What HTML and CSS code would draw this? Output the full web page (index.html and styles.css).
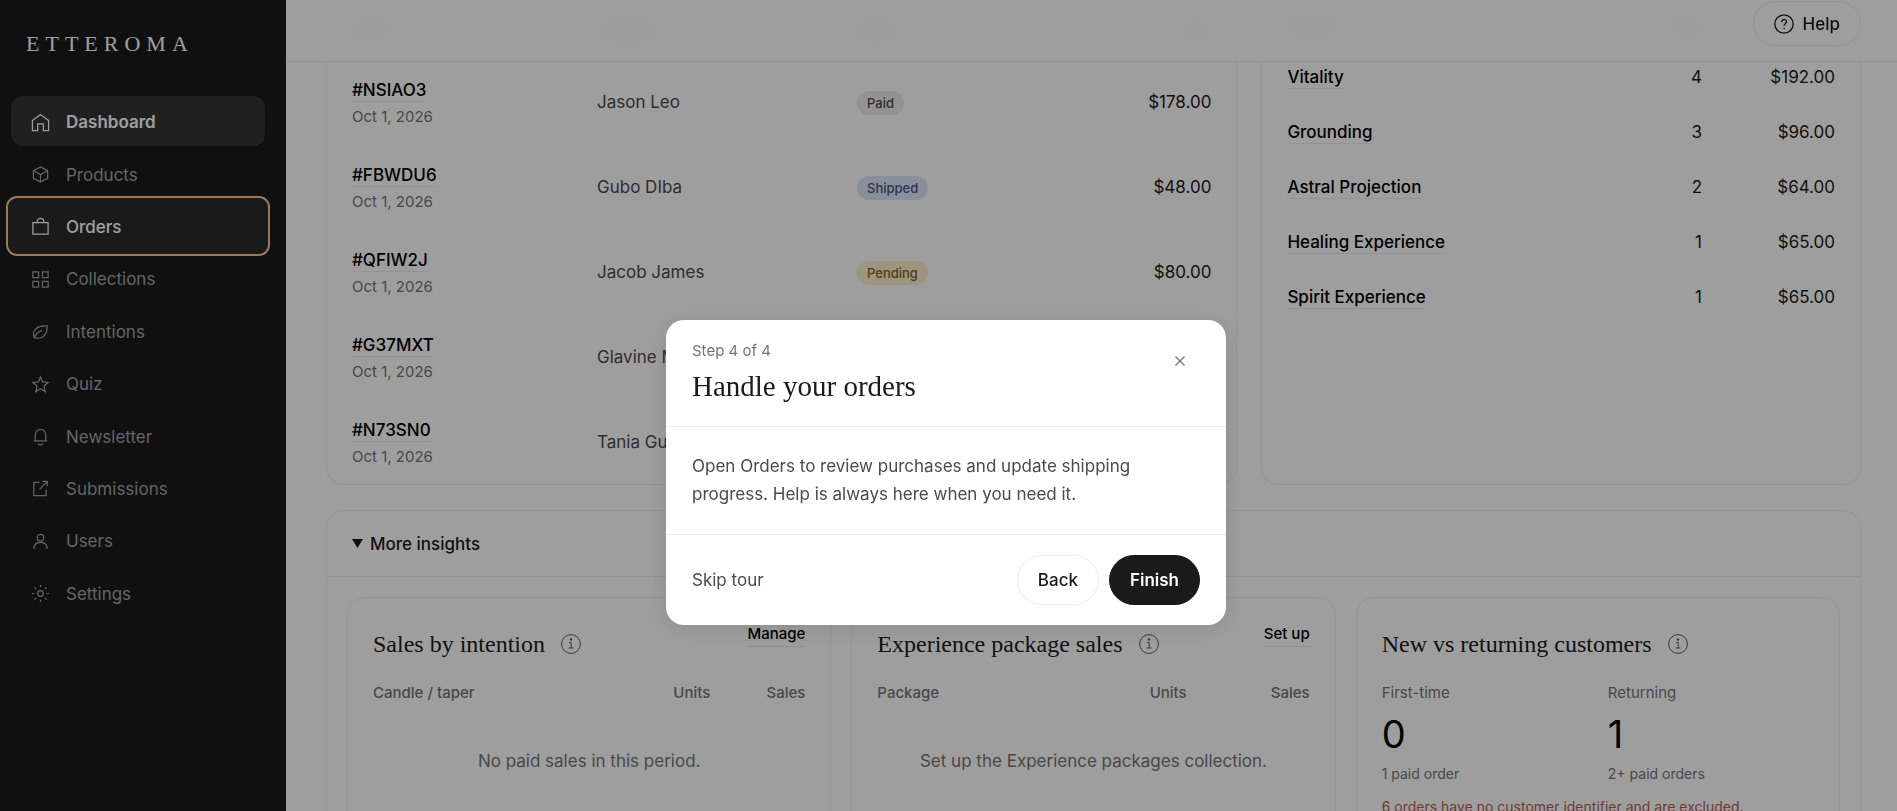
FILE: index.html
```html
<!DOCTYPE html>
<html lang="en">
<head>
    <meta charset="UTF-8">
    <meta name="viewport" content="width=device-width, initial-scale=1.0">
    <title>Etteroma Dashboard</title>
    <link rel="stylesheet" href="styles.css">
</head>
<body>
    <div class="layout">
        <aside class="sidebar">
            <a class="logo" href="#">ETTEROMA</a>
            <nav>
                <ul class="nav-list">
                    <li><a class="active" href="#"><svg viewBox="0 0 20 20"><path d="M1.500 8 10 1.500 18.500 8v10.500H13V11.500H7v7H1.500z"/></svg>Dashboard</a></li>
                    <li><a href="#"><svg viewBox="0 0 20 20"><path d="m10 2 7.500 4v8L10 18l-7.500-4V6zM2.500 6l7.500 4 7.500-4M10 10v8"/></svg>Products</a></li>
                    <li><a class="highlight" href="#"><svg viewBox="0 0 20 20"><path d="M2 6h16v12H2zM6.500 6V5a3.500 3.500 0 0 1 7 0v1"/></svg>Orders</a></li>
                    <li><a href="#"><svg viewBox="0 0 20 20"><path d="M2 2h6v6H2zM12 2h6v6h-6zM2 12h6v6H2zM12 12h6v6h-6z"/></svg>Collections</a></li>
                    <li><a href="#"><svg viewBox="0 0 20 20"><path d="M3.500 16.500C.5 9 6 3.500 17 4c.5 9-5 15-13.500 12.500zM3.500 16.500C5 12.500 8 10 11.500 9"/></svg>Intentions</a></li>
                    <li><a href="#"><svg viewBox="0 0 20 20"><path d="m10 2 2.300 5.300 5.700.5-4.300 3.800 1.300 5.900-5-3.100-5 3.100 1.300-5.900L2 7.800l5.700-.5z"/></svg>Quiz</a></li>
                    <li><a href="#"><svg viewBox="0 0 20 20"><path d="M3 14.500h14M4.500 14.500V8a5.500 5.500 0 0 1 11 0v6.500M7.500 17.500c1 1.700 4 1.700 5 0"/></svg>Newsletter</a></li>
                    <li><a href="#"><svg viewBox="0 0 20 20"><path d="M9 3.500H3v14h13V11M12 2.500h5v5M17 2.500 9 11"/></svg>Submissions</a></li>
                    <li><a href="#"><svg viewBox="0 0 20 20"><circle cx="10" cy="6" r="3.500"/><path d="M3 18c0-4.500 2.500-7 7-7s7 2.500 7 7"/></svg>Users</a></li>
                    <li><a href="#"><svg viewBox="0 0 20 20"><circle cx="10" cy="10" r="3"/><path d="M10 1v2.500M10 16.500V19M1 10h2.500M16.500 10H19M3.600 3.600l1.800 1.800M14.600 14.600l1.800 1.800M3.600 16.400l1.800-1.800M14.600 5.400l1.800-1.800"/></svg>Settings</a></li>
                </ul>
            </nav>
        </aside>

        <main class="main">
            <header class="topbar">
                <button class="btn help-btn" type="button">
                    <svg viewBox="0 0 20 20"><circle cx="10" cy="10" r="9.200"/><path d="M7.700 8c0-3.200 4.800-3.200 4.800-.3 0 1.800-2.400 1.900-2.400 4M10.100 13.700v1.200"/></svg>Help
                </button>
            </header>

            <div class="top-cards">
                <section class="card card-scrolled">
                    <table class="orders">
                        <thead>
                            <tr><th class="col-order">Order</th><th class="col-customer">Customer</th><th>Status</th><th class="num">Total</th></tr>
                        </thead>
                        <tbody>
                            <tr><td><a class="link" href="#">#NSIAO3</a><span class="date">Oct 1, 2026</span></td><td>Jason Leo</td><td><span class="badge">Paid</span></td><td class="num">$178.00</td></tr>
                            <tr><td><a class="link" href="#">#FBWDU6</a><span class="date">Oct 1, 2026</span></td><td>Gubo DIba</td><td><span class="badge shipped">Shipped</span></td><td class="num">$48.00</td></tr>
                            <tr><td><a class="link" href="#">#QFIW2J</a><span class="date">Oct 1, 2026</span></td><td>Jacob James</td><td><span class="badge pending">Pending</span></td><td class="num">$80.00</td></tr>
                            <tr><td><a class="link" href="#">#G37MXT</a><span class="date">Oct 1, 2026</span></td><td>Glavine M</td><td></td><td></td></tr>
                            <tr><td><a class="link" href="#">#N73SN0</a><span class="date">Oct 1, 2026</span></td><td>Tania Gu</td><td></td><td></td></tr>
                        </tbody>
                    </table>
                </section>

                <section class="card card-scrolled">
                    <table class="products">
                        <thead>
                            <tr><th>Product</th><th class="num col-units">Units</th><th class="col-sales" aria-label="Sales"></th></tr>
                        </thead>
                        <tbody>
                            <tr><td><a class="link" href="#">Vitality</a></td><td class="num">4</td><td class="num">$192.00</td></tr>
                            <tr><td><a class="link" href="#">Grounding</a></td><td class="num">3</td><td class="num">$96.00</td></tr>
                            <tr><td><a class="link" href="#">Astral Projection</a></td><td class="num">2</td><td class="num">$64.00</td></tr>
                            <tr><td><a class="link" href="#">Healing Experience</a></td><td class="num">1</td><td class="num">$65.00</td></tr>
                            <tr><td><a class="link" href="#">Spirit Experience</a></td><td class="num">1</td><td class="num">$65.00</td></tr>
                        </tbody>
                    </table>
                </section>
            </div>

            <details class="card insights" open>
                <summary><svg viewBox="0 0 12 12"><path d="M0 1h12L6 11z"/></svg>More insights</summary>
                <div class="insight-grid">
                    <section class="card insight">
                        <div class="insight-head">
                            <h2>Sales by intention</h2>
                            <svg class="info" viewBox="0 0 20 20"><circle cx="10" cy="10" r="9.400"/><path d="M8 8.500h2.200V14M7.500 14h5"/><circle class="dot" cx="10" cy="5.500" r="1.200"/></svg>
                            <a class="link" href="#">Manage</a>
                        </div>
                        <table class="small-table">
                            <thead><tr><th>Candle / taper</th><th class="num">Units</th><th class="num col-sales-sm">Sales</th></tr></thead>
                            <tbody><tr><td colspan="3">No paid sales in this period.</td></tr></tbody>
                        </table>
                    </section>
                    <section class="card insight">
                        <div class="insight-head">
                            <h2>Experience package sales</h2>
                            <svg class="info" viewBox="0 0 20 20"><circle cx="10" cy="10" r="9.400"/><path d="M8 8.500h2.200V14M7.500 14h5"/><circle class="dot" cx="10" cy="5.500" r="1.200"/></svg>
                            <a class="link" href="#">Set up</a>
                        </div>
                        <table class="small-table">
                            <thead><tr><th>Package</th><th class="num">Units</th><th class="num col-sales-lg">Sales</th></tr></thead>
                            <tbody><tr><td colspan="3">Set up the Experience packages collection.</td></tr></tbody>
                        </table>
                    </section>
                    <section class="card insight">
                        <div class="insight-head">
                            <h2>New vs returning customers</h2>
                            <svg class="info" viewBox="0 0 20 20"><circle cx="10" cy="10" r="9.400"/><path d="M8 8.500h2.200V14M7.500 14h5"/><circle class="dot" cx="10" cy="5.500" r="1.200"/></svg>
                        </div>
                        <div class="stats">
                            <div><span>First-time</span><strong>0</strong><small>1 paid order</small></div>
                            <div><span>Returning</span><strong>1</strong><small>2+ paid orders</small></div>
                        </div>
                        <p class="warning">6 orders have no customer identifier and are excluded.</p>
                    </section>
                </div>
            </details>
        </main>
    </div>

    <div class="overlay">
        <div class="modal" role="dialog" aria-labelledby="tourTitle">
            <div class="modal-header">
                <div>
                    <p class="step">Step 4 of 4</p>
                    <h1 id="tourTitle">Handle your orders</h1>
                </div>
                <button class="close-btn" type="button" aria-label="Close"><svg viewBox="0 0 10 10"><path d="m.5.5 9 9M9.500.5l-9 9"/></svg></button>
            </div>
            <p class="modal-body">Open Orders to review purchases and update shipping progress. Help is always here when you need it.</p>
            <div class="modal-footer">
                <button class="skip-btn" type="button">Skip tour</button>
                <button class="btn" type="button">Back</button>
                <button class="btn primary" type="button">Finish</button>
            </div>
        </div>
    </div>
</body>
</html>
```
FILE: styles.css
```css
* {
    box-sizing: border-box;
}
body {
    margin: 0;
    height: 100vh;
    overflow: hidden;
    font-family: Inter, "Liberation Sans", sans-serif;
    font-size: 17px;
    line-height: 26px;
    color: #1a1a1a;
    background-color: #fff;
}
h1, h2, p, ul {
    margin: 0;
    padding: 0;
}
h1, h2, .logo {
    font-family: "Liberation Serif", serif;
    font-weight: normal;
}
a {
    color: inherit;
    text-decoration: none;
}
button {
    font: inherit;
    color: inherit;
    background: none;
    border: none;
    cursor: pointer;
}
svg {
    flex: none;
    fill: none;
    stroke: currentColor;
    stroke-width: 1.3;
}
.layout {
    display: flex;
    height: 100vh;
}

/* sidebar */
.sidebar {
    flex: none;
    width: 286px;
    padding: 28px 21px 0 11px;
    background-color: #1a1a1a;
    color: #fff;
}
.logo {
    display: block;
    height: 68px;
    padding-left: 15px;
    font-size: 22px;
    line-height: 32px;
    letter-spacing: 6px;
}
.nav-list {
    display: grid;
    grid-auto-rows: 1fr;
    gap: 2px;
    height: 522px;
    list-style: none;
}
.nav-list a {
    display: flex;
    align-items: center;
    gap: 16px;
    height: 100%;
    padding: 2px 0 0 20px;
    border-radius: 12px;
    color: #a3a3a3;
}
.nav-list svg {
    width: 19px;
    height: 19px;
}
.nav-list .active {
    background-color: #343434;
    color: #fff;
    font-weight: 600;
}
.nav-list .highlight {
    background-color: #2a2a2a;
    color: #fff;
    font-weight: 500;
    border-radius: 6px;
    box-shadow: 0 0 0 3px #2a2a2a;
    outline: 2px solid #f8c490;
    outline-offset: 3px;
}

/* main area */
.main {
    position: relative;
    flex: 1;
    min-width: 0;
    padding: 0 36px 0 40px;
    overflow: hidden;
}
.topbar {
    position: absolute;
    top: 0;
    left: 0;
    right: 0;
    height: 62px;
    padding: 1px 36px;
    text-align: right;
    background-color: rgba(255, 255, 255, 0.9);
    backdrop-filter: blur(12px);
    border-bottom: 1px solid #f0f0f0;
    z-index: 1;
}
.btn {
    height: 50px;
    padding: 0 20px;
    border: 1px solid #ededed;
    border-radius: 25px;
    font-weight: 500;
}
.help-btn {
    display: inline-flex;
    align-items: center;
    gap: 9px;
    height: 45px;
}
.help-btn svg, .info {
    width: 20px;
    height: 20px;
}
.card {
    border: 1px solid #f0f0f0;
    border-radius: 18px;
}
.top-cards {
    display: grid;
    grid-template-columns: 38fr 25fr;
    gap: 24px;
}
.card-scrolled {
    padding: 0 25px;
    border-top: none;
    border-radius: 0 0 18px 18px;
}
table {
    width: 100%;
    border-collapse: collapse;
    table-layout: fixed;
}
th, td {
    padding: 0;
    text-align: left;
}
th {
    font-size: 14px;
    font-weight: 500;
    color: #757575;
}
.num {
    text-align: right;
}
.orders th {
    height: 59px;
}
.orders td {
    height: 85px;
    color: #4a4a4a;
}
.orders td:first-child {
    padding-top: 4px;
}
.orders td.num {
    color: #1a1a1a;
}
.col-order {
    width: 245px;
}
.col-customer {
    width: 260px;
}
.products th {
    height: 49px;
}
.products td {
    height: 55px;
}
.col-units {
    width: 120px;
}
.col-sales {
    width: 133px;
}
.link {
    padding-bottom: 1px;
    color: #000;
    font-weight: 500;
    line-height: 22px;
    border-bottom: 1px solid #ededed;
}
.date {
    display: block;
    font-size: 15px;
    line-height: 28px;
    color: #757575;
}
.badge {
    display: inline-block;
    padding: 0 10px;
    border-radius: 12px;
    font-size: 13px;
    font-weight: 500;
    line-height: 24px;
    background-color: #ededed;
}
.shipped {
    background-color: #dfe8fa;
    color: #43557a;
}
.pending {
    background-color: #fff0cf;
    color: #83621f;
}

/* insights */
.insights {
    margin-top: 25px;
}
summary {
    display: flex;
    align-items: center;
    gap: 7px;
    height: 66px;
    padding-left: 25px;
    font-weight: 500;
    list-style: none;
    border-bottom: 1px solid #ededed;
}
summary svg {
    width: 11px;
    height: 11px;
    fill: currentColor;
    stroke: none;
}
.insight-grid {
    display: grid;
    grid-template-columns: repeat(3, 1fr);
    gap: 20px;
    padding: 20px;
}
.insight {
    height: 300px;
    padding: 25px;
}
.insight-head {
    display: flex;
    align-items: center;
    height: 42px;
}
h2 {
    font-size: 24px;
    line-height: 32px;
}
.info {
    margin-left: 16px;
    color: #5c5c5c;
    stroke-width: 1;
}
.dot {
    fill: currentColor;
    stroke: none;
}
.insight-head .link {
    align-self: flex-start;
    margin-left: auto;
    font-size: 15px;
}
.small-table th {
    height: 56px;
    width: 90px;
    font-size: 15px;
}
.small-table th:first-child {
    width: auto;
}
.small-table th.col-sales-sm {
    width: 95px;
}
.small-table th.col-sales-lg {
    width: 123px;
}
.small-table td {
    height: 80px;
    text-align: center;
    color: #757575;
}
.stats {
    display: grid;
    grid-template-columns: 1fr 1fr;
    gap: 20px;
    padding-top: 15px;
    font-size: 15px;
    color: #757575;
}
.stats strong {
    display: block;
    font-size: 38px;
    font-weight: normal;
    line-height: 56px;
    color: #000;
}
.stats small {
    display: block;
    font-size: 14px;
    line-height: 24px;
}
.warning {
    margin-top: 8px;
    font-size: 14px;
    color: #b2604f;
}

/* tour dialog */
.overlay {
    position: fixed;
    inset: 0;
    padding: 320px 5px 0 0;
    background-color: rgba(0, 0, 0, 0.38);
    z-index: 2;
}
.modal {
    width: 560px;
    margin: 0 auto;
    border-radius: 18px;
    background-color: #fff;
    box-shadow: 0 4px 24px rgba(0, 0, 0, 0.12);
}
.modal-header {
    display: flex;
    justify-content: space-between;
    align-items: flex-start;
    height: 107px;
    padding: 18px 26px 0;
    border-bottom: 1px solid #ededed;
}
.step {
    font-size: 15px;
    color: #757575;
}
h1 {
    font-size: 29px;
    line-height: 44px;
}
.close-btn {
    width: 40px;
    height: 44px;
    padding: 0;
    color: #757575;
}
.close-btn svg {
    width: 10px;
    height: 10px;
}
.modal-body {
    padding: 25px 26px 26px;
    line-height: 28px;
    color: #4a4a4a;
}
.modal-footer {
    display: flex;
    align-items: center;
    gap: 10px;
    padding: 20px 26px;
    border-top: 1px solid #ededed;
}
.skip-btn {
    margin-right: auto;
    padding: 0;
    color: #4a4a4a;
}
.btn.primary {
    border-color: #1a1a1a;
    background-color: #1a1a1a;
    color: #fff;
    font-weight: 600;
}
```
